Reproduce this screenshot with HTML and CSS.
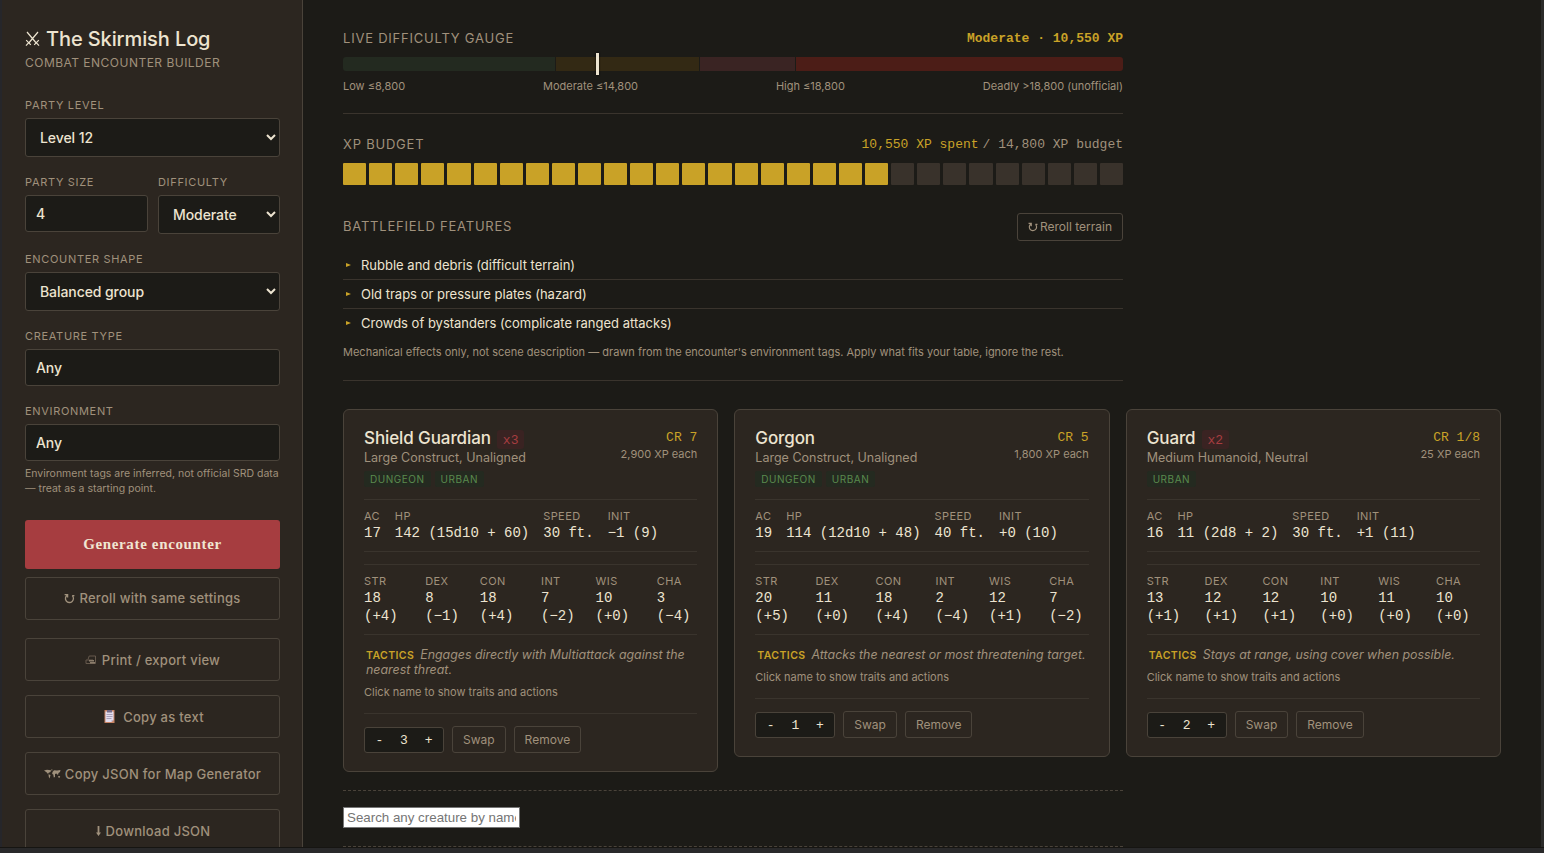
FILE: index.html
```html
<!DOCTYPE html>
<html lang="en">
<head>
<meta charset="utf-8">
<title>The Skirmish Log</title>
<link rel="stylesheet" href="styles.css">
</head>
<body>
<div class="app">
  <aside class="sidebar">
    <h1 class="brand">
      <svg class="brand-icon" viewBox="0 0 15 16" width="15" height="16"><path d="M2 1l8.800 10.500M13 1L4.200 11.500M1.200 9.200l4.600 4.600M13.800 9.200l-4.600 4.600M3.800 11.600L1 14.600M11.200 11.600l2.800 3" /></svg>
      <span>The Skirmish Log</span>
    </h1>
    <p class="tagline">COMBAT ENCOUNTER BUILDER</p>

    <div class="field"><label class="label">PARTY LEVEL</label><select class="control select"><option>Level 12</option></select></div>
    <div class="field-row">
      <div class="field"><label class="label">PARTY SIZE</label><input class="control" value="4"></div>
      <div class="field"><label class="label">DIFFICULTY</label><select class="control select"><option>Moderate</option></select></div>
    </div>
    <div class="field"><label class="label">ENCOUNTER SHAPE</label><select class="control select"><option>Balanced group</option></select></div>
    <div class="field"><label class="label">CREATURE TYPE</label><input class="control" value="Any"></div>
    <div class="field"><label class="label">ENVIRONMENT</label><input class="control" value="Any"></div>
    <p class="help">Environment tags are inferred, not official SRD data<br>— treat as a starting point.</p>

    <button class="primary">Generate encounter</button>
    <button class="secondary reroll"><svg class="stroke" width="11" height="11" viewBox="0 0 11 11"><path d="M3.200 2.200A4 4 0 1 0 8.200 2.600M.6 1.600h3v3M8.200 2.600h2.200"/></svg>Reroll with same settings</button>
    <button class="secondary"><svg class="printer" width="12" height="10" viewBox="0 0 12 10"><path d="M3 4.500L4.200 1h6.300v5M1 8.500V5h7M1 8.500h9.500V6"/><path class="fill" d="M4 5h5v1.600H4zM5 7h5v1.500H5z"/></svg>Print / export view</button>
    <button class="secondary copy"><svg width="11" height="13" viewBox="0 0 11 13"><path fill="#c88464" d="M.5 0h10v13H.5z"/><path fill="#e2dcec" d="M1.500 1.500h8V10L7.500 12h-6z"/><path fill="#756b88" d="M3 0h5v2.500H3z"/><path stroke="#a9a0bb" d="M2.500 4.500h6M2.500 6.500h6M2.500 8.500h5"/><path fill="#b9abc7" d="M9.500 10h-2v2z"/></svg>Copy as text</button>
    <button class="secondary"><svg class="map" width="17" height="10" viewBox="0 0 17 10"><path d="M0 1.500L3 .8 7 1.200 6.500 3 4.700 3.700 4 5 2.800 3.500zM4.500 5.200L6.500 6 5.600 9.500 4.800 8zM7 .5h1.500L8 2zM8.500 3L10 1.200l3 .3L16.500 1 16 3l-1.500 1L14 6l-1.600-1.500L11 5v3L9.800 8.500 9.300 5.500 8.200 5zM14.200 7l2 .3-.5 1.500-1.400-.3z"/></svg>Copy JSON for Map Generator</button>
    <button class="secondary download"><svg class="map" width="5" height="10" viewBox="0 0 5 10"><path d="M1.600 0h1.800v6.500H5L2.500 10 0 6.500h1.600z"/></svg>Download JSON</button>
  </aside>

  <main class="main">
    <section class="gauge">
      <div class="head"><h2 class="heading">LIVE DIFFICULTY GAUGE</h2><strong class="reading">Moderate · 10,550 XP</strong></div>
      <div class="gauge-track">
        <i class="seg low"></i><i class="seg mod"></i><i class="seg high"></i><i class="seg deadly"></i>
        <b class="marker"></b>
      </div>
      <div class="gauge-labels"><span>Low ≤8,800</span><span>Moderate ≤14,800</span><span>High ≤18,800</span><span>Deadly &gt;18,800 (unofficial)</span></div>
    </section>

    <section class="budget">
      <div class="head"><h2 class="heading">XP BUDGET</h2><span class="spend"><em>10,550 XP spent</em>/ 14,800 XP budget</span></div>
      <div class="cells">
        <i class="on"></i><i class="on"></i><i class="on"></i><i class="on"></i><i class="on"></i><i class="on"></i><i class="on"></i><i class="on"></i><i class="on"></i><i class="on"></i><i class="on"></i><i class="on"></i><i class="on"></i><i class="on"></i><i class="on"></i><i class="on"></i><i class="on"></i><i class="on"></i><i class="on"></i><i class="on"></i><i class="on"></i><i></i><i></i><i></i><i></i><i></i><i></i><i></i><i></i><i></i>
      </div>
    </section>

    <section class="terrain">
      <div class="terrain-head"><h2 class="heading">BATTLEFIELD FEATURES</h2><button class="small"><svg class="stroke" width="10" height="10" viewBox="0 0 11 11"><path d="M3.200 2.200A4 4 0 1 0 8.200 2.600M.6 1.600h3v3M8.200 2.600h2.200"/></svg>Reroll terrain</button></div>
      <ul class="features">
        <li>Rubble and debris (difficult terrain)</li>
        <li>Old traps or pressure plates (hazard)</li>
        <li>Crowds of bystanders (complicate ranged attacks)</li>
      </ul>
      <p class="note">Mechanical effects only, not scene description — drawn from the encounter's environment tags. Apply what fits your table, ignore the rest.</p>
    </section>

    <section class="cards">
      <article class="card">
        <header class="card-head">
          <div><h3 class="name">Shield Guardian<span class="count">x3</span></h3><p class="kind">Large Construct, Unaligned</p></div>
          <div class="rating"><p class="cr">CR 7</p><p class="xp">2,900 XP each</p></div>
        </header>
        <div class="tags"><span>DUNGEON</span><span>URBAN</span></div>
        <dl class="stats"><div><dt>AC</dt><dd>17</dd></div><div><dt>HP</dt><dd>142 (15d10 + 60)</dd></div><div><dt>SPEED</dt><dd>30 ft.</dd></div><div><dt>INIT</dt><dd>−1 (9)</dd></div></dl>
        <dl class="stats abilities"><div><dt>STR</dt><dd>18 (+4)</dd></div><div><dt>DEX</dt><dd>8 (−1)</dd></div><div><dt>CON</dt><dd>18 (+4)</dd></div><div><dt>INT</dt><dd>7 (−2)</dd></div><div><dt>WIS</dt><dd>10 (+0)</dd></div><div><dt>CHA</dt><dd>3 (−4)</dd></div></dl>
        <p class="tactics"><b>TACTICS</b>Engages directly with Multiattack against the nearest threat.</p>
        <p class="hint">Click name to show traits and actions</p>
        <footer class="actions"><div class="stepper"><span>-</span><span>3</span><span>+</span></div><button class="small">Swap</button><button class="small">Remove</button></footer>
      </article>

      <article class="card">
        <header class="card-head">
          <div><h3 class="name">Gorgon</h3><p class="kind">Large Construct, Unaligned</p></div>
          <div class="rating"><p class="cr">CR 5</p><p class="xp">1,800 XP each</p></div>
        </header>
        <div class="tags"><span>DUNGEON</span><span>URBAN</span></div>
        <dl class="stats"><div><dt>AC</dt><dd>19</dd></div><div><dt>HP</dt><dd>114 (12d10 + 48)</dd></div><div><dt>SPEED</dt><dd>40 ft.</dd></div><div><dt>INIT</dt><dd>+0 (10)</dd></div></dl>
        <dl class="stats abilities"><div><dt>STR</dt><dd>20 (+5)</dd></div><div><dt>DEX</dt><dd>11 (+0)</dd></div><div><dt>CON</dt><dd>18 (+4)</dd></div><div><dt>INT</dt><dd>2 (−4)</dd></div><div><dt>WIS</dt><dd>12 (+1)</dd></div><div><dt>CHA</dt><dd>7 (−2)</dd></div></dl>
        <p class="tactics"><b>TACTICS</b>Attacks the nearest or most threatening target.</p>
        <p class="hint">Click name to show traits and actions</p>
        <footer class="actions"><div class="stepper"><span>-</span><span>1</span><span>+</span></div><button class="small">Swap</button><button class="small">Remove</button></footer>
      </article>

      <article class="card">
        <header class="card-head">
          <div><h3 class="name">Guard<span class="count">x2</span></h3><p class="kind">Medium Humanoid, Neutral</p></div>
          <div class="rating"><p class="cr">CR 1/8</p><p class="xp">25 XP each</p></div>
        </header>
        <div class="tags"><span>URBAN</span></div>
        <dl class="stats"><div><dt>AC</dt><dd>16</dd></div><div><dt>HP</dt><dd>11 (2d8 + 2)</dd></div><div><dt>SPEED</dt><dd>30 ft.</dd></div><div><dt>INIT</dt><dd>+1 (11)</dd></div></dl>
        <dl class="stats abilities"><div><dt>STR</dt><dd>13 (+1)</dd></div><div><dt>DEX</dt><dd>12 (+1)</dd></div><div><dt>CON</dt><dd>12 (+1)</dd></div><div><dt>INT</dt><dd>10 (+0)</dd></div><div><dt>WIS</dt><dd>11 (+0)</dd></div><div><dt>CHA</dt><dd>10 (+0)</dd></div></dl>
        <p class="tactics"><b>TACTICS</b>Stays at range, using cover when possible.</p>
        <p class="hint">Click name to show traits and actions</p>
        <footer class="actions"><div class="stepper"><span>-</span><span>2</span><span>+</span></div><button class="small">Swap</button><button class="small">Remove</button></footer>
      </article>
    </section>

    <section class="search"><input class="search-input" placeholder="Search any creature by name"></section>
  </main>
</div>
</body>
</html>
```

FILE: styles.css
```css
:root {
  --bg: #1c1b17;
  --panel: #2c2620;
  --line: #4a433a;
  --rule: #3a342d;
  --text: #ede4d0;
  --muted: #a0917c;
  --gold: #c9a227;
  --mono: "Liberation Mono", monospace;
}
* { box-sizing: border-box; margin: 0; }
body {
  height: 853px;
  overflow: hidden;
  background: var(--bg);
  color: var(--text);
  font-family: Inter, sans-serif;
  border-bottom: 5px solid #29292a;
}
button, input, select { font-family: inherit; margin: 0; }
.app { display: flex; height: 848px; overflow: hidden; border-bottom: 1px solid #161512; }

/* Sidebar */
.sidebar {
  width: 303px;
  flex: none;
  padding: 26px 22px 0 23px;
  background: var(--panel);
  border-left: 2px solid #26262a;
  border-right: 1px solid var(--line);
}
.brand { display: flex; align-items: center; gap: 6px; font-size: 20px; font-weight: 500; line-height: 26px; letter-spacing: -.1px; white-space: nowrap; }
.brand-icon { fill: none; stroke: var(--text); stroke-width: 1.2; }
.tagline { margin: 2px 0 26px; font-size: 12px; line-height: 18px; letter-spacing: .48px; color: var(--muted); white-space: nowrap; }
.label { display: block; margin-bottom: 6px; font-size: 11px; line-height: 14px; letter-spacing: .68px; color: var(--muted); }
.field { margin-bottom: 18px; }
.field-row { display: grid; grid-template-columns: 123px 122px; gap: 10px; }
.control {
  display: block;
  width: 100%;
  height: 37px;
  padding: 0 10px;
  border: 1px solid var(--line);
  border-radius: 3px;
  background: var(--bg);
  color: var(--text);
  font-size: 14px;
  font-weight: 500;
  letter-spacing: -.08px;
}
.select { height: 39px; }
.help { margin: -13px 0 24px; font-size: 10.500px; line-height: 15px; color: var(--muted); white-space: nowrap; }
.primary {
  display: block;
  width: 100%;
  height: 49px;
  border: 0;
  border-radius: 3px;
  background: #a63d40;
  color: #f0e6d2;
  font: bold 15px "Liberation Serif", serif;
  letter-spacing: .65px;
}
.secondary {
  display: flex;
  align-items: center;
  justify-content: center;
  gap: 4px;
  width: 100%;
  height: 43px;
  margin-bottom: 14px;
  padding: 0;
  border: 1px solid var(--line);
  border-radius: 3px;
  background: transparent;
  color: var(--muted);
  font-size: 13px;
  font-weight: 500;
  letter-spacing: .26px;
  white-space: nowrap;
}
.reroll { height: 43px; margin: 8px 0 18px; padding-bottom: 1px; }
.copy { gap: 8px; padding-left: 3px; }
.download { gap: 5px; padding-left: 1px; }
.stroke { fill: none; stroke: currentColor; stroke-width: 1.3; }
.printer { fill: none; stroke: #66594c; margin-right: 1px; }
.printer .fill { fill: #8b7d6b; stroke: none; }
.map { fill: currentColor; }

/* Main column */
.main { flex: 1; padding: 28px 40px 0; border-right: 3px solid #2b2b2a; }
.gauge, .budget, .terrain, .search { width: 780px; }
.head { display: flex; justify-content: space-between; align-items: center; height: 20px; margin-bottom: 9px; }
.heading { font-size: 13px; font-weight: 400; letter-spacing: .78px; color: var(--muted); }
.reading, .spend { margin-top: 1px; font-family: var(--mono); font-size: 13px; }
.reading { color: var(--gold); }
.spend { color: var(--muted); }
.spend em { margin-right: 4px; font-style: normal; color: var(--gold); }
.gauge { height: 86px; border-bottom: 1px solid var(--rule); }
.gauge-track { position: relative; display: grid; grid-template-columns: 212px 143px 95px 327px; gap: 1px; height: 14px; border-radius: 3px; }
.low { background: #232a20; border-radius: 3px 0 0 3px; }
.mod { background: #332914; }
.high { background: #3a2423; }
.deadly { background: #4c1d17; border-radius: 0 3px 3px 0; }
.marker { position: absolute; left: 252.500px; top: -4px; width: 3px; height: 22px; background: var(--text); box-shadow: 0 0 2px #000; }
.gauge-labels { display: flex; justify-content: space-between; margin-top: 8px; font-size: 11px; line-height: 14px; color: var(--muted); }
.budget { padding-top: 20px; }
.cells { display: grid; grid-template-columns: repeat(30, 1fr); gap: 3px; height: 22px; }
.cells i { border-radius: 1px; background: #39322b; }
.cells .on { background: var(--gold); }
.terrain { height: 196px; padding-top: 28px; border-bottom: 1px solid var(--rule); }
.terrain-head { display: flex; justify-content: space-between; align-items: center; margin-bottom: 10px; }
.terrain-head .heading { margin-bottom: 2px; }
.small {
  display: flex;
  align-items: center;
  gap: 2px;
  height: 28px;
  padding: 0 10px 1px;
  border: 1px solid var(--line);
  border-radius: 3px;
  background: transparent;
  color: var(--muted);
  font-size: 12px;
}
.features { padding: 0; list-style: none; }
.features li { display: flex; align-items: center; height: 29px; border-bottom: 1px solid var(--rule); font-size: 13px; }
.features li::before { content: ""; margin: 0 10px 0 3px; border-left: 5px solid var(--gold); border-top: 2.500px solid transparent; border-bottom: 2.500px solid transparent; }
.features li:last-child { height: 28px; border: 0; }
.note { margin-top: 8px; font-size: 11px; line-height: 14px; color: var(--muted); white-space: nowrap; }

/* Creature cards */
.cards { display: grid; grid-template-columns: repeat(3, 1fr); gap: 16px; align-items: start; margin: 28px 0 18px; }
.card { min-width: 0; padding: 17px 20px 18px; border: 1px solid var(--line); border-radius: 6px; background: var(--panel); }
.card-head { display: flex; justify-content: space-between; height: 40px; }
.name { display: flex; height: 22px; gap: 6px; font-size: 17px; font-weight: 500; line-height: 22px; letter-spacing: -.1px; white-space: nowrap; }
.count { height: 19px; margin-top: 3px; padding: 0 6px; border-radius: 3px; background: #3a2322; color: #a63d40; font: 13px/21px var(--mono); letter-spacing: 0; }
.kind { font-size: 12.500px; line-height: 17px; color: var(--muted); white-space: nowrap; }
.rating { text-align: right; }
.cr { padding-top: 2px; font: 13px/17px var(--mono); color: var(--gold); }
.xp { font-size: 11px; line-height: 16px; color: var(--muted); }
.tags { display: flex; gap: 4px; height: 16px; margin: 4px 0 12px; }
.tags span { padding: 0 6px; border-radius: 2px; background: #242a20; color: #5a8a4e; font-size: 10px; line-height: 17px; letter-spacing: .52px; }
.stats { display: flex; gap: 14px; height: 53px; padding-top: 9px; border-top: 1px solid var(--rule); border-bottom: 1px solid var(--rule); }
.stats dt { font-size: 11px; line-height: 14px; letter-spacing: .4px; color: var(--muted); }
.stats dd { margin: 1px 0 0; font: 14px/18px var(--mono); }
.abilities { height: 71px; margin-top: 12px; }
.tactics { padding: 12px 0 0 2px; font-size: 12.400px; line-height: 15px; font-style: italic; color: var(--muted); }
.tactics b { margin-right: 6px; font-size: 10.500px; line-height: 1; font-style: normal; font-weight: 600; letter-spacing: .4px; color: var(--gold); }
.hint { margin: 8px 0 14px; font-size: 11px; line-height: 14px; color: var(--muted); }
.actions { display: flex; align-items: end; gap: 8px; height: 40px; border-top: 1px solid var(--rule); }
.actions .small { height: 27px; }
.stepper { display: flex; justify-content: space-between; align-items: center; width: 80px; height: 26px; padding: 0 10.500px; border: 1px solid var(--line); border-radius: 3px; background: var(--bg); font: 13px var(--mono); }

.search { height: 57px; padding-top: 16px; border: dashed var(--line); border-width: 1px 0; }
.search-input { display: block; width: 177px; height: 21px; padding: 1px 3px; border: 1px solid #767676; background: #fff; font-family: "Liberation Sans", sans-serif; font-size: 13.333px; }
```
